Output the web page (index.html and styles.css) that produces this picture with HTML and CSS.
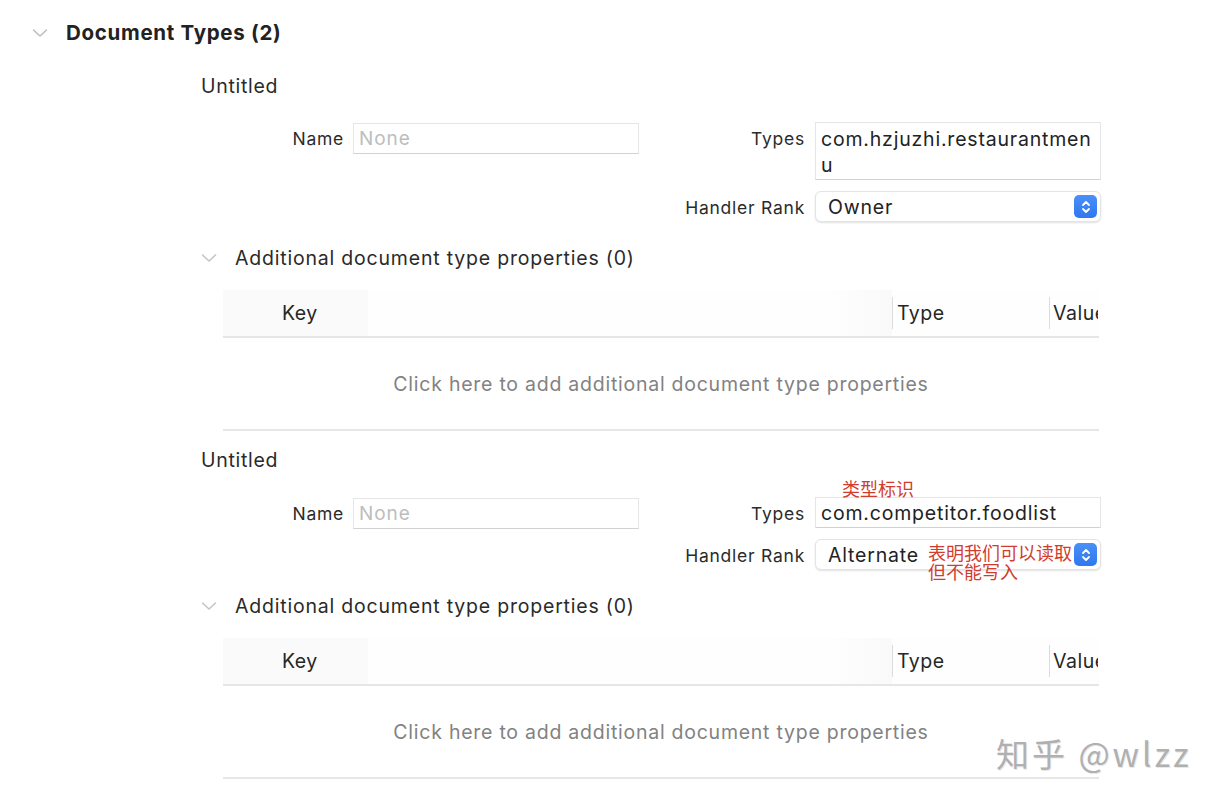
FILE: index.html
```html
<!DOCTYPE html>
<html>
<head>
<meta charset="utf-8">
<link rel="stylesheet" href="styles.css">
</head>
<body>
<div class="page">
  <div class="section-header">
    <svg class="chev chev-top" width="16" height="10" viewBox="0 0 16 10"><path d="M1.5 2 L8 8 L14.5 2" fill="none" stroke="#bdbdbd" stroke-width="1.6" stroke-linecap="round" stroke-linejoin="round"/></svg>
    <span class="section-title">Document Types (2)</span>
  </div>

  <div class="doc">
    <div class="doc-title">Untitled</div>
    <div class="fields">
      <div class="col-left">
        <span class="label name-label">Name</span>
        <div class="input placeholder">None</div>
      </div>
      <div class="col-right">
        <div class="frow">
          <span class="label">Types</span>
          <div class="input tall">com.hzjuzhi.restaurantmen<br>u</div>
        </div>
        <div class="frow">
          <span class="label">Handler Rank</span>
          <div class="popup"><span>Owner</span>
            <span class="stepper"><svg width="12" height="16" viewBox="0 0 12 16"><path d="M3 6 L6 3 L9 6 M3 10 L6 13 L9 10" fill="none" stroke="#fff" stroke-width="1.8" stroke-linecap="round" stroke-linejoin="round"/></svg></span>
          </div>
        </div>
      </div>
    </div>
    <div class="sub-header">
      <svg class="chev" width="16" height="10" viewBox="0 0 16 10"><path d="M1.5 2 L8 8 L14.5 2" fill="none" stroke="#c4c4c4" stroke-width="1.6" stroke-linecap="round" stroke-linejoin="round"/></svg>
      <span>Additional document type properties (0)</span>
    </div>
    <div class="table">
      <div class="thead">
        <div class="th key">Key</div>
        <div class="th spacer"></div>
        <div class="th type">Type</div>
        <div class="th value">Value</div>
      </div>
      <div class="tbody">Click here to add additional document type properties</div>
    </div>
  </div>

  <div class="doc doc2">
    <div class="doc-title">Untitled</div>
    <div class="fields">
      <div class="col-left">
        <span class="label name-label">Name</span>
        <div class="input placeholder">None</div>
      </div>
      <div class="col-right">
        <div class="frow">
          <span class="label">Types</span>
          <div class="input">com.competitor.foodlist</div>
        </div>
        <div class="frow">
          <span class="label">Handler Rank</span>
          <div class="popup"><span>Alternate</span>
            <span class="stepper"><svg width="12" height="16" viewBox="0 0 12 16"><path d="M3 6 L6 3 L9 6 M3 10 L6 13 L9 10" fill="none" stroke="#fff" stroke-width="1.8" stroke-linecap="round" stroke-linejoin="round"/></svg></span>
          </div>
        </div>
      </div>
      <span class="note note-type">类型标识</span>
      <span class="note note-rank">表明我们可以读取<br>但不能写入</span>
    </div>
    <div class="sub-header">
      <svg class="chev" width="16" height="10" viewBox="0 0 16 10"><path d="M1.5 2 L8 8 L14.5 2" fill="none" stroke="#c4c4c4" stroke-width="1.6" stroke-linecap="round" stroke-linejoin="round"/></svg>
      <span>Additional document type properties (0)</span>
    </div>
    <div class="table">
      <div class="thead">
        <div class="th key">Key</div>
        <div class="th spacer"></div>
        <div class="th type">Type</div>
        <div class="th value">Value</div>
      </div>
      <div class="tbody">Click here to add additional document type properties</div>
    </div>
  </div>

  <div class="watermark">知乎 @wlzz</div>
</div>
</body>
</html>
```

FILE: styles.css
```css
html, body {
  margin: 0;
  padding: 0;
  background: #ffffff;
}
body {
  font-family: "Inter", "Noto Sans", "Noto Sans CJK SC", sans-serif;
  color: #262626;
  width: 1220px;
  height: 802px;
  overflow: hidden;
}
.page {
  position: relative;
  width: 1220px;
  height: 802px;
}
.section-header {
  height: 64px;
  display: flex;
  align-items: center;
  padding-left: 32px;
}
.chev-top {
  margin-right: 18px;
  margin-top: 1px;
}
.section-title {
  font-size: 20.5px;
  font-weight: 700;
  color: #222;
  letter-spacing: 0.7px;
}
.doc {
  padding-left: 201px;
}
.doc2 {
  margin-top: 14px;
}
.doc-title {
  height: 30px;
  line-height: 30px;
  margin-top: 7px;
  font-size: 19.5px;
  letter-spacing: 0.7px;
  color: #2a2a2a;
}
.doc2 .doc-title {
  margin-top: 0;
}
.fields {
  position: relative;
  display: flex;
  margin-top: 21px;
}
.doc2 .fields {
  margin-top: 22px;
}
.col-left {
  display: flex;
  align-items: flex-start;
  width: 438px;
}
.name-label {
  width: 143px;
  margin-right: 9px;
}
.col-left .input {
  margin-top: 1px;
}
.col-right {
  display: flex;
  flex-direction: column;
  gap: 11px;
}
.frow {
  display: flex;
  align-items: flex-start;
}
.frow .label {
  width: 166px;
  margin-right: 10px;
}
.label {
  text-align: right;
  font-size: 17.5px;
  letter-spacing: 0.75px;
  line-height: 31px;
  height: 31px;
  padding-top: 1px;
  box-sizing: border-box;
  color: #2b2b2b;
}
.input {
  width: 286px;
  box-sizing: border-box;
  height: 31px;
  border: 1px solid #e6e6e6;
  border-bottom-color: #d2d2d2;
  background: #fff;
  padding: 0 5px;
  font-size: 19.5px;
  letter-spacing: 0.8px;
  line-height: 31px;
  color: #222;
  white-space: nowrap;
}
.input.tall {
  height: 58px;
  line-height: 26px;
  padding-top: 3px;
}
.input.placeholder {
  color: #bdbdbd;
  font-size: 19px;
  letter-spacing: 0.9px;
  line-height: 30px;
}
.popup {
  width: 286px;
  box-sizing: border-box;
  height: 31px;
  border: 1px solid #e4e4e4;
  border-radius: 6px;
  box-shadow: 0 1px 2px rgba(0,0,0,0.12);
  background: #fff;
  display: flex;
  align-items: center;
  justify-content: space-between;
  padding: 0 3px 0 12px;
  font-size: 19.5px;
  letter-spacing: 0.8px;
  color: #222;
}
.stepper {
  width: 23px;
  height: 23px;
  border-radius: 5px;
  background: linear-gradient(#4a90f7, #2f78ee);
  display: flex;
  align-items: center;
  justify-content: center;
}
.sub-header {
  height: 30px;
  margin-top: 21px;
  display: flex;
  align-items: center;
  font-size: 19.5px;
  letter-spacing: 0.8px;
  color: #2a2a2a;
}
.sub-header .chev {
  margin-right: 18px;
}
.table {
  margin-top: 17px;
  margin-left: 22px;
  width: 876px;
}
.thead {
  height: 46px;
  display: flex;
  align-items: stretch;
  border-bottom: 2px solid #e6e6e6;
  background: #fefefe;
  font-size: 19.5px;
  letter-spacing: 0.5px;
  color: #262626;
}
.th {
  display: flex;
  align-items: center;
}
.th.key {
  width: 86px;
  padding-left: 59px;
  background: #fafafa;
}
.th.spacer {
  width: 524px;
  background: linear-gradient(90deg, #fefefe 88%, #f9f9f9);
}
.th.type {
  width: 152px;
  padding-left: 4px;
  border-left: 1px solid #dcdcdc;
  margin: 7px 0;
}
.th.value {
  width: 45px;
  padding-left: 3px;
  border-left: 1px solid #dcdcdc;
  margin: 7px 0;
  overflow: hidden;
  white-space: nowrap;
}
.tbody {
  height: 91px;
  border-bottom: 2px solid #e6e6e6;
  display: flex;
  align-items: center;
  justify-content: center;
  font-size: 19.5px;
  letter-spacing: 0.75px;
  color: #828282;
  padding-left: 0;
}
.note {
  position: absolute;
  color: #d03d2e;
  font-family: "Noto Sans CJK SC", sans-serif;
  font-size: 18px;
  line-height: 19px;
}
.note-type {
  left: 641px;
  top: -18px;
}
.note-rank {
  left: 727px;
  top: 46px;
}
.watermark {
  position: absolute;
  left: 996px;
  top: 729px;
  font-family: "Noto Sans CJK SC", sans-serif;
  font-size: 33px;
  color: #b0b0b0;
  text-shadow: 1px 1px 0 #e8e8e8;
  letter-spacing: 3px;
}
```
